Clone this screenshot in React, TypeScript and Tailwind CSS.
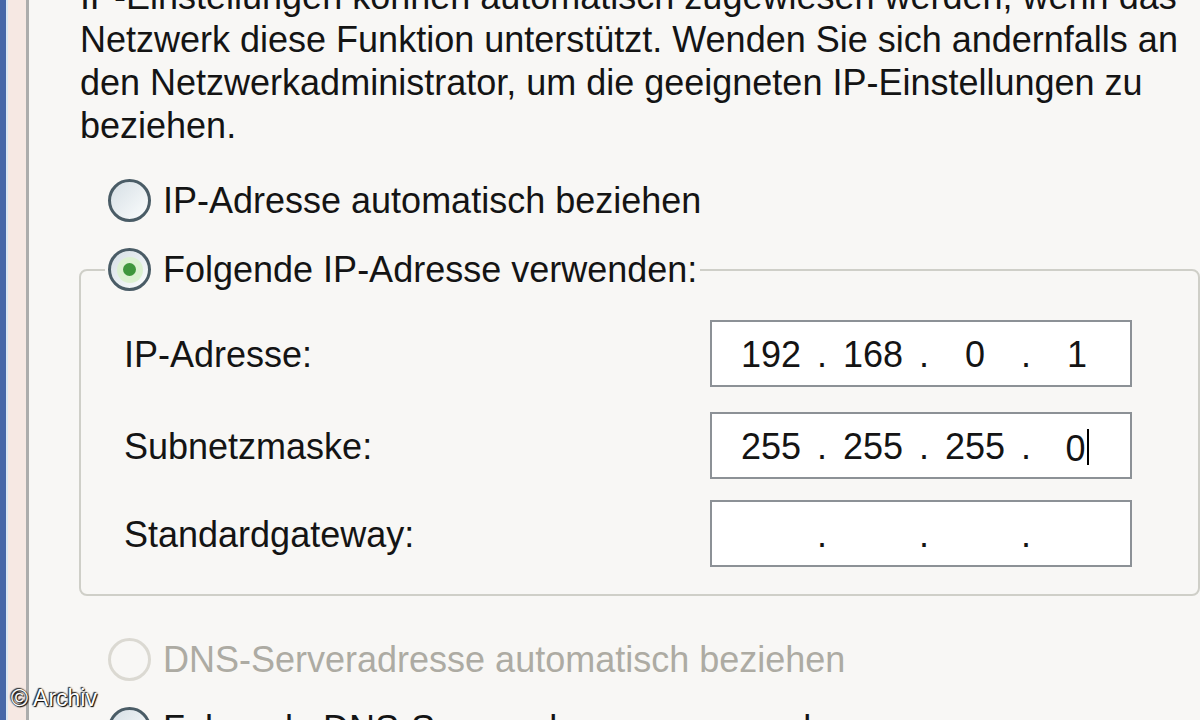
import type { ReactNode } from 'react'

type RadioState = 'off' | 'on' | 'disabled'

function Radio({ state }: { state: RadioState }) {
  if (state === 'disabled') {
    return <span className="size-[43px] shrink-0 rounded-full border-[3px] border-[#dbd9d2]" />
  }
  return (
    <span className="flex size-[43px] shrink-0 items-center justify-center rounded-full border-[3px] border-[#4a5c66] bg-linear-to-br from-[#d6dfe5] to-[#fbfdfd]">
      {state === 'on' && (
        <span className="flex size-[26px] items-center justify-center rounded-full bg-[#dcf1d2]">
          <span className="size-[13px] rounded-full bg-[#3f963c]" />
        </span>
      )}
    </span>
  )
}

function RadioRow({ state, children }: { state: RadioState, children: ReactNode }) {
  return (
    <div className="flex h-[43px] items-center gap-[12px] whitespace-nowrap">
      <Radio state={state} />
      <span className={state === 'disabled' ? 'text-[#adaba3]' : ''}>{children}</span>
    </div>
  )
}

function IpField({ parts, cursor }: { parts: string[], cursor?: boolean }) {
  return (
    <div className="h-[67px] border-2 border-[#8c9196] bg-white">
      <div className="flex pl-[18px] pt-[11px]">
        {parts.map((p, i) => (
          <div key={i} className="flex">
            {i > 0 && <span className="w-[20px] text-center">.</span>}
            <span className="w-[82px] text-center">
              {p}
              {cursor && i === parts.length - 1 && (
                <span className="ml-px inline-block h-[36px] w-[2px] translate-y-[4px] bg-black align-baseline" />
              )}
            </span>
          </div>
        ))}
      </div>
    </div>
  )
}

const rows = [
  { label: 'IP-Adresse:', parts: ['192', '168', '0', '1'], mt: 'mt-0' },
  { label: 'Subnetzmaske:', parts: ['255', '255', '255', '0'], mt: 'mt-[25px]', cursor: true },
  { label: 'Standardgateway:', parts: ['', '', '', ''], mt: 'mt-[21px]' },
]

export default function App() {
  return (
    <div className="relative flex h-[720px] w-[1200px] overflow-hidden bg-[#f8f7f5] font-['Liberation_Sans',Arial,sans-serif] text-[36px] leading-[43px] text-[#141414]">
      {/* window frame on the left */}
      <div className="w-[6px] shrink-0 bg-[#4767a8]" />
      <div className="w-[2px] shrink-0 bg-[#dbe7f3]" />
      <div className="w-[18px] shrink-0 bg-[#f6e8e3]" />
      <div className="w-[3px] shrink-0 bg-[#acacac]" />

      <div className="min-w-0 flex-1">
        <p className="mt-[-25px] whitespace-nowrap pl-[51px]">
          IP-Einstellungen können automatisch zugewiesen werden, wenn das
          <br />
          Netzwerk diese Funktion unterstützt. Wenden Sie sich andernfalls an
          <br />
          den Netzwerkadministrator, um die geeigneten IP-Einstellungen zu
          <br />
          beziehen.
        </p>

        <div className="mt-[32px] pl-[79px]">
          <RadioRow state="off">IP-Adresse automatisch beziehen</RadioRow>
        </div>

        <fieldset className="mt-[26px] ml-[50px] min-w-0 rounded-[8px] border-2 border-[#cfcfc8] p-0">
          <legend className="ml-[24px] px-[3px]">
            <RadioRow state="on">Folgende IP-Adresse verwenden:</RadioRow>
          </legend>
          <div className="pl-[43px] pt-[29px] pb-[27px]">
            {rows.map(r => (
              <div key={r.label} className={`grid grid-cols-[586px_422px] ${r.mt}`}>
                <span className="whitespace-nowrap pt-[13px]">{r.label}</span>
                <IpField parts={r.parts} cursor={r.cursor} />
              </div>
            ))}
          </div>
        </fieldset>

        <div className="mt-[42px] pl-[79px]">
          <RadioRow state="disabled">DNS-Serveradresse automatisch beziehen</RadioRow>
        </div>
        <div className="mt-[26px] pl-[79px]">
          <RadioRow state="off">Folgende DNS-Serveradressen verwenden:</RadioRow>
        </div>
      </div>

      <div className="absolute bottom-[9px] left-[11px] text-[23px] leading-[26px] text-white [text-shadow:0_0_2px_#000,1px_1px_1px_#000,-1px_-1px_1px_#333]">
        © Archiv
      </div>
    </div>
  )
}
